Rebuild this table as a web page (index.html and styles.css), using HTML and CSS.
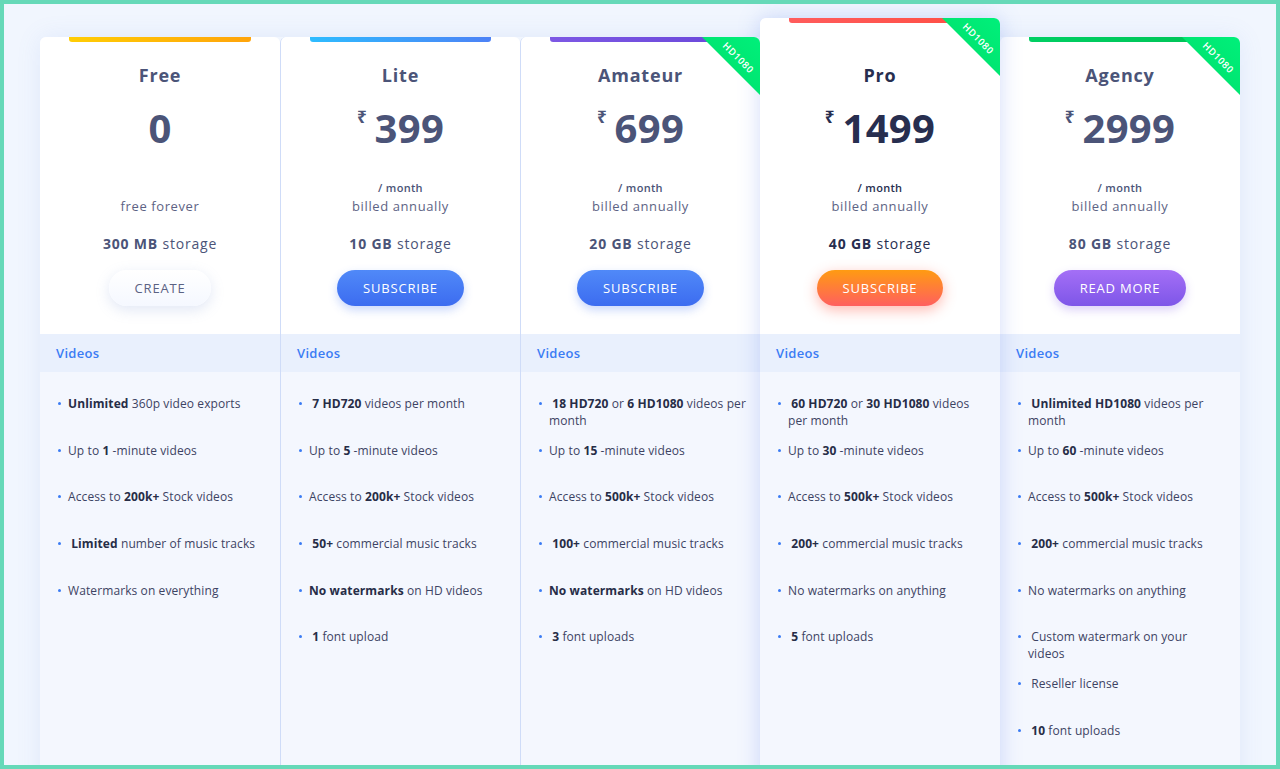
FILE: index.html
```html
<!DOCTYPE html>
<html lang="en">
<head>
<meta charset="utf-8">
<title>Pricing</title>
<link rel="stylesheet" href="styles.css">
</head>
<body>
<div class="frame">
  <div class="plans">
    <!-- Free -->
    <div class="card free">
      <div class="top">
        <div class="accent"></div>
        <h2 class="name">Free</h2>
        <div class="price"><span class="num">0</span></div>
        <div class="per">&nbsp;</div>
        <div class="billed">free forever</div>
        <div class="storage"><b>300 MB</b> storage</div>
        <a class="btn btn-white">CREATE</a>
      </div>
      <div class="cat">Videos</div>
      <ul class="feats">
        <li><b>Unlimited</b> 360p video exports</li>
        <li>Up to <b>1</b> -minute videos</li>
        <li>Access to <b>200k+</b> Stock videos</li>
        <li>&nbsp;<b>Limited</b> number of music tracks</li>
        <li>Watermarks on everything</li>
      </ul>
    </div>
    <!-- Lite -->
    <div class="card lite">
      <div class="top">
        <div class="accent"></div>
        <h2 class="name">Lite</h2>
        <div class="price"><span class="cur">₹</span><span class="num">399</span></div>
        <div class="per">/ month</div>
        <div class="billed">billed annually</div>
        <div class="storage"><b>10 GB</b> storage</div>
        <a class="btn btn-blue">SUBSCRIBE</a>
      </div>
      <div class="cat">Videos</div>
      <ul class="feats">
        <li>&nbsp;<b>7 HD720</b> videos per month</li>
        <li>Up to <b>5</b> -minute videos</li>
        <li>Access to <b>200k+</b> Stock videos</li>
        <li>&nbsp;<b>50+</b> commercial music tracks</li>
        <li><b>No watermarks</b> on HD videos</li>
        <li>&nbsp;<b>1</b> font upload</li>
      </ul>
    </div>
    <!-- Amateur -->
    <div class="card amateur">
      <div class="top">
        <div class="accent"></div>
        <div class="ribbon"><span>HD1080</span></div>
        <h2 class="name">Amateur</h2>
        <div class="price"><span class="cur">₹</span><span class="num">699</span></div>
        <div class="per">/ month</div>
        <div class="billed">billed annually</div>
        <div class="storage"><b>20 GB</b> storage</div>
        <a class="btn btn-blue">SUBSCRIBE</a>
      </div>
      <div class="cat">Videos</div>
      <ul class="feats">
        <li>&nbsp;<b>18 HD720</b> or <b>6 HD1080</b> videos per<br>month</li>
        <li>Up to <b>15</b> -minute videos</li>
        <li>Access to <b>500k+</b> Stock videos</li>
        <li>&nbsp;<b>100+</b> commercial music tracks</li>
        <li><b>No watermarks</b> on HD videos</li>
        <li>&nbsp;<b>3</b> font uploads</li>
      </ul>
    </div>
    <!-- Pro -->
    <div class="card pro">
      <div class="top">
        <div class="accent"></div>
        <div class="ribbon"><span>HD1080</span></div>
        <h2 class="name">Pro</h2>
        <div class="price"><span class="cur">₹</span><span class="num">1499</span></div>
        <div class="per">/ month</div>
        <div class="billed">billed annually</div>
        <div class="storage"><b>40 GB</b> storage</div>
        <a class="btn btn-orange">SUBSCRIBE</a>
      </div>
      <div class="cat">Videos</div>
      <ul class="feats">
        <li>&nbsp;<b>60 HD720</b> or <b>30 HD1080</b> videos<br>per month</li>
        <li>Up to <b>30</b> -minute videos</li>
        <li>Access to <b>500k+</b> Stock videos</li>
        <li>&nbsp;<b>200+</b> commercial music tracks</li>
        <li>No watermarks on anything</li>
        <li>&nbsp;<b>5</b> font uploads</li>
      </ul>
    </div>
    <!-- Agency -->
    <div class="card agency">
      <div class="top">
        <div class="accent"></div>
        <div class="ribbon"><span>HD1080</span></div>
        <h2 class="name">Agency</h2>
        <div class="price"><span class="cur">₹</span><span class="num">2999</span></div>
        <div class="per">/ month</div>
        <div class="billed">billed annually</div>
        <div class="storage"><b>80 GB</b> storage</div>
        <a class="btn btn-purple">READ MORE</a>
      </div>
      <div class="cat">Videos</div>
      <ul class="feats">
        <li>&nbsp;<b>Unlimited HD1080</b> videos per<br>month</li>
        <li>Up to <b>60</b> -minute videos</li>
        <li>Access to <b>500k+</b> Stock videos</li>
        <li>&nbsp;<b>200+</b> commercial music tracks</li>
        <li>No watermarks on anything</li>
        <li>&nbsp;Custom watermark on your<br>videos</li>
        <li>&nbsp;Reseller license</li>
        <li>&nbsp;<b>10</b> font uploads</li>
      </ul>
    </div>
  </div>
</div>
</body>
</html>
```

FILE: styles.css
```css
* { box-sizing: border-box; }
html, body { margin: 0; padding: 0; }
body {
  font-family: "Open Sans", "Noto Sans", sans-serif;
  color: #4b5478;
}
.frame {
  width: 1280px;
  height: 769px;
  border: 4px solid #66d9b8;
  background: #f1f6fe;
  overflow: hidden;
  padding: 33px 0 0 36px;
}
.plans {
  display: flex;
  align-items: flex-start;
  width: 1200px;
  box-shadow: 0 0 24px rgba(110, 140, 230, 0.12);
  border-radius: 6px;
}
.card {
  flex: 0 0 240px;
  position: relative;
  display: flex;
  flex-direction: column;
  height: 760px;
  border-radius: 6px 6px 0 0;
  overflow: hidden;
  background: #f4f7fe;
}
.card.lite, .card.amateur { border-left: 1px solid #cfdcf8; }
.card.pro {
  margin-top: -19px;
  height: 780px;
  z-index: 2;
  box-shadow: 0 0 22px rgba(90, 125, 235, 0.28);
}
.top {
  position: relative;
  background: #fff;
  display: flex;
  flex-direction: column;
  align-items: center;
  padding: 26px 0 28px;
}
.pro .top { padding-top: 45px; }
.accent {
  position: absolute;
  top: 0;
  left: 29px;
  right: 29px;
  height: 5px;
  border-radius: 0 0 3px 3px;
}
.free .accent { background: linear-gradient(90deg, #ffcd05, #ffa40b); }
.lite .accent { background: linear-gradient(90deg, #2ebcff, #4d82f6); }
.amateur .accent { background: linear-gradient(90deg, #7d58e4, #6a48da); }
.pro .accent { background: linear-gradient(90deg, #ff5c5c, #ff4f45); }
.agency .accent { background: linear-gradient(90deg, #00cf63, #00c457); }

.ribbon {
  position: absolute;
  top: 0;
  right: 0;
  width: 58px;
  height: 58px;
  background: linear-gradient(225deg, #00f07a, #00dc6a);
  clip-path: polygon(0 0, 100% 0, 100% 100%);
  z-index: 3;
}
.ribbon span {
  position: absolute;
  left: 5px;
  top: 16px;
  width: 62px;
  line-height: 10px;
  text-align: center;
  font-size: 9.5px;
  font-weight: 600;
  letter-spacing: 0.6px;
  color: #fff;
  transform: rotate(45deg);
}
.name {
  margin: 0;
  font-size: 18px;
  line-height: 24px;
  font-weight: 700;
  letter-spacing: 0.8px;
}
.price {
  margin-top: 18px;
  display: flex;
  align-items: flex-start;
  height: 46px;
}
.cur {
  font-family: "Noto Sans", "DejaVu Sans", sans-serif;
  font-size: 17px;
  font-weight: 700;
  line-height: 20px;
  margin-right: 8px;
  margin-top: 2px;
}
.num {
  font-size: 40px;
  line-height: 46px;
  font-weight: 700;
  letter-spacing: 0.3px;
}
.per {
  margin-top: 27px;
  font-size: 11px;
  line-height: 19px;
  font-weight: 600;
  letter-spacing: 0.3px;
}
.billed {
  font-size: 13px;
  line-height: 19px;
  letter-spacing: 0.6px;
  color: #5d6384;
}
.storage {
  margin-top: 18px;
  font-size: 14px;
  line-height: 20px;
  letter-spacing: 0.8px;
  color: #4b5478;
}
.storage b { font-weight: 700; }
.btn {
  margin-top: 16px;
  height: 36px;
  line-height: 36px;
  padding: 0 26px;
  border-radius: 18px;
  font-size: 13px;
  letter-spacing: 0.8px;
  color: #fff;
  text-decoration: none;
}
.btn-white {
  background: linear-gradient(180deg, #ffffff, #f5f8ff);
  color: #5b6283;
  box-shadow: 0 4px 14px rgba(120, 145, 210, 0.22);
}
.btn-blue {
  background: linear-gradient(180deg, #5089f8, #3c6cf0);
  box-shadow: 0 4px 10px rgba(60, 110, 240, 0.28);
}
.btn-orange {
  background: linear-gradient(180deg, #ff9b12, #ff5f5f);
  box-shadow: 0 4px 14px rgba(255, 100, 80, 0.45);
}
.btn-purple {
  background: linear-gradient(180deg, #a46ff6, #7e56e8);
  box-shadow: 0 4px 10px rgba(130, 90, 230, 0.28);
}
.pro .name, .pro .num, .pro .cur, .pro .per, .pro .storage { color: #272e4f; }

.cat {
  height: 38px;
  line-height: 38px;
  padding-left: 16px;
  background: #e9f0fd;
  color: #3b7cf4;
  font-size: 13px;
  font-weight: 600;
  letter-spacing: 0.3px;
}
.feats {
  list-style: none;
  margin: 0;
  padding: 23px 4px 0 0;
  flex: 1;
}
.feats li {
  position: relative;
  min-height: 46.7px;
  padding-left: 28px;
  font-size: 12px;
  line-height: 17px;
  letter-spacing: 0.1px;
  color: #3d4363;
  white-space: nowrap;
}
.feats li::before {
  content: "";
  position: absolute;
  left: 18px;
  top: 7px;
  width: 3px;
  height: 3px;
  border-radius: 50%;
  background: #3b7cf4;
}
.feats b { font-weight: 700; color: #272d47; }
```
